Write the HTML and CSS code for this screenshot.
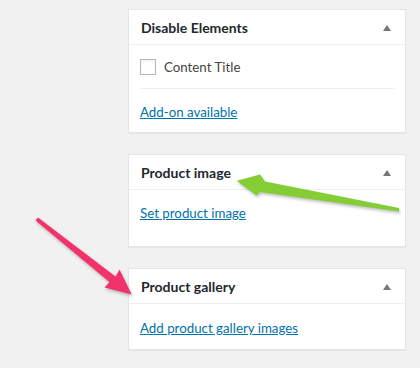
FILE: index.html
```html
<!DOCTYPE html>
<html>
<head>
<meta charset="utf-8">
<link rel="stylesheet" href="styles.css">
</head>
<body>
<div class="column">
  <div class="box">
    <div class="box-head">
      <h2 class="box-title">Disable Elements</h2>
      <span class="toggle"></span>
    </div>
    <div class="box-body body-disable">
      <label class="check-row"><span class="checkbox"></span><span>Content Title</span></label>
      <div class="sep"></div>
      <a class="link" href="#">Add-on available</a>
    </div>
  </div>
  <div class="box">
    <div class="box-head">
      <h2 class="box-title">Product image</h2>
      <span class="toggle"></span>
    </div>
    <div class="box-body body-image">
      <a class="link" href="#">Set product image</a>
    </div>
  </div>
  <div class="box">
    <div class="box-head">
      <h2 class="box-title">Product gallery</h2>
      <span class="toggle"></span>
    </div>
    <div class="box-body body-gallery">
      <a class="link" href="#">Add product gallery images</a>
    </div>
  </div>
</div>
<svg class="arrows" width="420" height="368" viewBox="0 0 420 368">
  <polygon class="arrow-green" points="236.7,180.7 260,174.5 265,181.5 399,208 399,211.5 260,192 256.5,195.5"/>
  <polygon class="arrow-pink" points="131.7,294.5 119.5,269.5 115.5,276.5 38,217.5 35.5,220.5 109.5,282 104.5,287.5"/>
</svg>
</body>
</html>
```
FILE: styles.css
```css
html, body {
  margin: 0;
  padding: 0;
}
body {
  background: #f1f1f1;
  width: 420px;
  height: 368px;
  overflow: hidden;
  position: relative;
  font-family: Lato, "Open Sans", sans-serif;
  color: #444;
}
.column {
  display: flex;
  flex-direction: column;
  gap: 21px;
  padding: 9px 0 0 128px;
  width: 278px;
}
.box {
  background: #fff;
  border: 1px solid #e5e5e5;
  box-shadow: 0 1px 1px rgba(0, 0, 0, 0.04);
}
.box-head {
  height: 34px;
  border-bottom: 1px solid #eee;
  display: flex;
  align-items: center;
  justify-content: space-between;
  padding: 0 14px 0 12px;
}
.box-title {
  margin: 0;
  font-size: 14px;
  font-weight: 700;
  color: #23282d;
  line-height: 20px;
  padding-top: 1px;
}
.toggle {
  width: 0;
  height: 0;
  border-left: 4.5px solid transparent;
  border-right: 4.5px solid transparent;
  border-bottom: 6px solid #72777c;
  margin-top: 2px;
}
.box-body {
  padding: 0 10px 0 11px;
  display: flex;
  flex-direction: column;
  align-items: flex-start;
}
.body-disable {
  padding-top: 14px;
  height: 73px;
}
.body-image {
  padding-top: 14px;
  height: 42px;
}
.body-gallery {
  padding-top: 15px;
  height: 30px;
}
.check-row {
  display: flex;
  align-items: center;
  gap: 8px;
  font-size: 13.3px;
  color: #444;
  height: 16px;
}
.checkbox {
  width: 14px;
  height: 14px;
  border: 1px solid #b4b9be;
  background: #fff;
  box-shadow: inset 0 1px 2px rgba(0, 0, 0, 0.07);
}
.sep {
  align-self: stretch;
  height: 1px;
  background: #eee;
  margin: 13px 0 14px;
}
.link {
  font-size: 13.3px;
  line-height: 18px;
  color: #0073aa;
  text-decoration: underline;
}
.arrows {
  position: absolute;
  left: 0;
  top: 0;
}
.arrow-green {
  fill: #84cd34;
  filter: drop-shadow(1px 2px 1.5px rgba(0, 0, 0, 0.25));
}
.arrow-pink {
  fill: #f2336b;
  filter: drop-shadow(1px 2px 1.5px rgba(0, 0, 0, 0.25));
}
```
